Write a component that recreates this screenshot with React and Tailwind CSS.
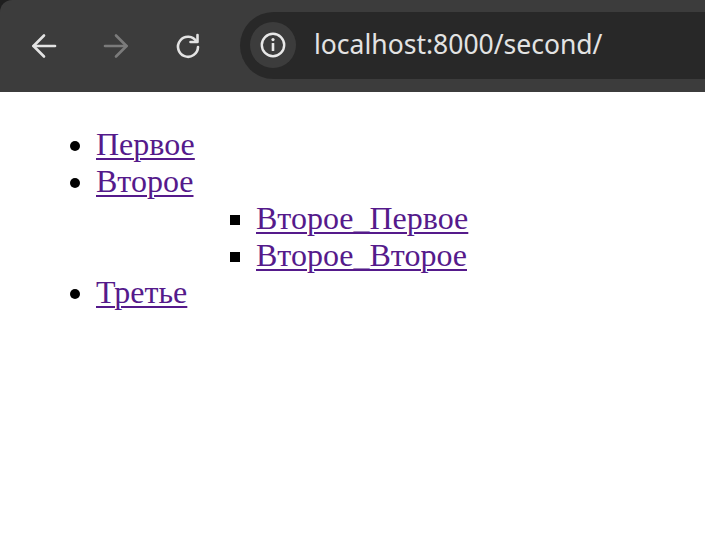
import React from "react";

function Back({ color }) {
  return (
    <svg width="28" height="28" viewBox="0 0 28 28" fill="none" stroke={color} strokeWidth="2.6" strokeLinecap="round" strokeLinejoin="round">
      <path d="M25 14H3.5" />
      <path d="M14 3.5L3.5 14L14 24.5" />
    </svg>
  );
}

function Fwd({ color }) {
  return (
    <svg width="28" height="28" viewBox="0 0 28 28" fill="none" stroke={color} strokeWidth="2.6" strokeLinecap="round" strokeLinejoin="round">
      <path d="M3 14H24.5" />
      <path d="M14 3.5L24.5 14L14 24.5" />
    </svg>
  );
}

function Reload() {
  return (
    <svg width="28" height="28" viewBox="0 0 28 28" fill="none" stroke="#e3e3e3" strokeWidth="2.6" strokeLinecap="round" strokeLinejoin="round">
      <path d="M22.5 9.5A10 10 0 1 0 24 15" />
      <path d="M23.5 3V10H16.5" />
    </svg>
  );
}

function Info() {
  return (
    <svg width="28" height="28" viewBox="0 0 28 28" fill="none">
      <circle cx="14" cy="14" r="11.2" stroke="#e8e8e8" strokeWidth="2.4" />
      <rect x="12.7" y="12" width="2.6" height="8" rx="0.6" fill="#e8e8e8" />
      <circle cx="14" cy="8.6" r="1.6" fill="#e8e8e8" />
    </svg>
  );
}

const linkCls = "text-[#551a8b] underline decoration-[2px] underline-offset-[3px]";

export default function App() {
  return (
    <div className="w-[705px] h-[535px] bg-white overflow-hidden">
      <div className="bg-[#1f1f1f]">
        <div className="h-[92px] bg-[#3c3c3c] rounded-tl-[12px] flex items-center">
          <div className="w-[88px] flex justify-center">
            <Back color="#e3e3e3" />
          </div>
          <div className="w-[56px] flex justify-center">
            <Fwd color="#7b7b7b" />
          </div>
          <div className="w-[88px] flex justify-center">
            <Reload />
          </div>
          <div className="ml-[8px] mb-[2px] flex-1 h-[67px] bg-[#282828] rounded-l-full flex items-center pl-[10px]">
            <div className="w-[46px] h-[46px] rounded-full bg-[#3c3c3c] flex items-center justify-center">
              <Info />
            </div>
            <span
              className="ml-[18px] text-[#e3e3e3] text-[26.5px]"
              style={{ fontFamily: '"Noto Sans", "Open Sans", sans-serif' }}
            >
              localhost:8000/second/
            </span>
          </div>
        </div>
      </div>
      <div
        className="pt-[34px] pl-[16px] text-black text-[32px] leading-[36.9px]"
        style={{ fontFamily: '"Liberation Serif", "Times New Roman", serif' }}
      >
        <ul className="list-disc pl-[80px]">
          <li>
            <a className={linkCls} href="#">Первое</a>
          </li>
          <li>
            <a className={linkCls} href="#">Второе</a>
            <ul className="list-[square] pl-[160px]">
              <li>
                <a className={linkCls} href="#">Второе_Первое</a>
              </li>
              <li>
                <a className={linkCls} href="#">Второе_Второе</a>
              </li>
            </ul>
          </li>
          <li>
            <a className={linkCls} href="#">Третье</a>
          </li>
        </ul>
      </div>
    </div>
  );
}
